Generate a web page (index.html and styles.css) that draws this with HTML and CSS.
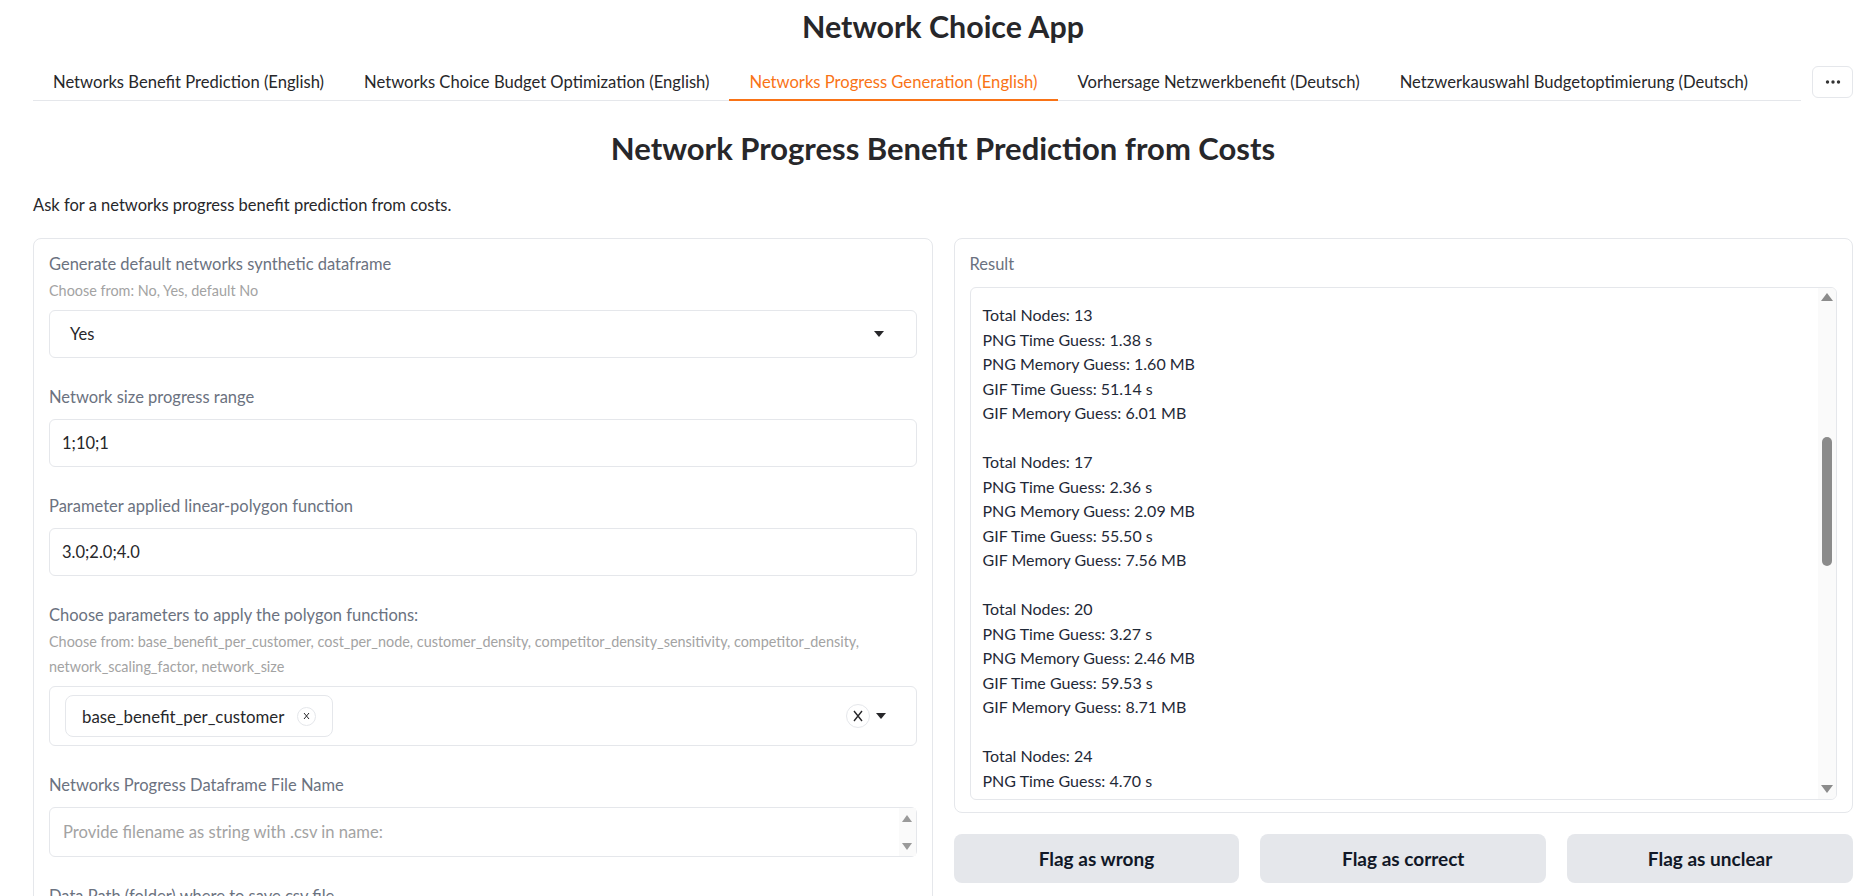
FILE: index.html
```html
<!DOCTYPE html>
<html lang="en">
<head>
<meta charset="utf-8">
<title>Network Choice App</title>
<link rel="stylesheet" href="styles.css">
</head>
<body>
<div class="app">
  <h1 class="app-title">Network Choice App</h1>
  <div class="tabbar">
    <nav class="tabs">
      <button class="tab">Networks Benefit Prediction (English)</button>
      <button class="tab">Networks Choice Budget Optimization (English)</button>
      <button class="tab active">Networks Progress Generation (English)</button>
      <button class="tab">Vorhersage Netzwerkbenefit (Deutsch)</button>
      <button class="tab">Netzwerkauswahl Budgetoptimierung (Deutsch)</button>
    </nav>
    <button class="more" aria-label="More tabs">
      <svg width="16" height="4" viewBox="0 0 16 4"><circle cx="2.5" cy="2" r="1.7"/><circle cx="8" cy="2" r="1.7"/><circle cx="13.5" cy="2" r="1.7"/></svg>
    </button>
  </div>
  <h2 class="page-title">Network Progress Benefit Prediction from Costs</h2>
  <p class="desc">Ask for a networks progress benefit prediction from costs.</p>

  <div class="columns">
    <section class="panel form">
      <div class="field">
        <div class="label has-info">Generate default networks synthetic dataframe</div>
        <div class="info">Choose from: No, Yes, default No</div>
        <div class="select"><span>Yes</span><span class="caret"></span></div>
      </div>
      <div class="field">
        <div class="label">Network size progress range</div>
        <div class="input">1;10;1</div>
      </div>
      <div class="field">
        <div class="label">Parameter applied linear-polygon function</div>
        <div class="input">3.0;2.0;4.0</div>
      </div>
      <div class="field">
        <div class="label has-info">Choose parameters to apply the polygon functions:</div>
        <div class="info">Choose from: base_benefit_per_customer, cost_per_node, customer_density, competitor_density_sensitivity, competitor_density, network_scaling_factor, network_size</div>
        <div class="multi">
          <span class="chip">base_benefit_per_customer
            <span class="chip-x"><svg width="7" height="8" viewBox="0 0 7 8"><path d="M1 1L6 7M6 1L1 7" stroke="#27272a" stroke-width="1"/></svg></span>
          </span>
          <span class="multi-tools">
            <span class="clear"><svg width="10" height="12" viewBox="0 0 10 12"><path d="M1 1L9 11M9 1L1 11" stroke="#27272a" stroke-width="1.4"/></svg></span>
            <span class="caret"></span>
          </span>
        </div>
      </div>
      <div class="field">
        <div class="label">Networks Progress Dataframe File Name</div>
        <div class="textarea">
          <span class="placeholder">Provide filename as string with .csv in name:</span>
          <span class="mini-scroll"><span class="arr up"></span><span class="arr down"></span></span>
        </div>
      </div>
      <div class="field">
        <div class="label">Data Path (folder) where to save csv file</div>
        <div class="input"></div>
      </div>
    </section>

    <div class="right">
      <section class="panel result">
        <div class="label">Result</div>
        <div class="result-box">
          <div class="result-text">
            <p>Total Nodes: 13<br>PNG Time Guess: 1.38 s<br>PNG Memory Guess: 1.60 MB<br>GIF Time Guess: 51.14 s<br>GIF Memory Guess: 6.01 MB</p>
            <p>Total Nodes: 17<br>PNG Time Guess: 2.36 s<br>PNG Memory Guess: 2.09 MB<br>GIF Time Guess: 55.50 s<br>GIF Memory Guess: 7.56 MB</p>
            <p>Total Nodes: 20<br>PNG Time Guess: 3.27 s<br>PNG Memory Guess: 2.46 MB<br>GIF Time Guess: 59.53 s<br>GIF Memory Guess: 8.71 MB</p>
            <p>Total Nodes: 24<br>PNG Time Guess: 4.70 s<br>PNG Memory Guess: 2.95 MB<br>GIF Time Guess: 63.89 s<br>GIF Memory Guess: 10.02 MB</p>
          </div>
          <div class="scrollbar">
            <span class="arr up"></span>
            <span class="thumb"></span>
            <span class="spacer"></span>
            <span class="arr down"></span>
          </div>
        </div>
      </section>
      <div class="flags">
        <button class="flag">Flag as wrong</button>
        <button class="flag">Flag as correct</button>
        <button class="flag">Flag as unclear</button>
      </div>
    </div>
  </div>
</div>
</body>
</html>
```
FILE: styles.css
```css
* { box-sizing: border-box; }
html, body { margin: 0; background: #fff; overflow: hidden; }
body {
  font-family: Lato, "Liberation Sans", sans-serif;
  font-size: 16.5px;
  color: #27272a;
}
.app { padding: 6px 22px 0 33px; }

.app-title {
  margin: 0;
  text-align: center;
  font-size: 30.4px;
  line-height: 40px;
  font-weight: 700;
  color: #27272a;
}

.tabbar { display: flex; align-items: center; gap: 11px; margin-top: 16px; }
.tabs { flex: 1; display: flex; border-bottom: 1px solid #e5e7eb; }
.tab {
  font: inherit;
  font-size: 16.6px;
  line-height: 24px;
  background: none;
  border: 0;
  border-bottom: 2px solid transparent;
  margin-bottom: -1px;
  padding: 8px 20px 5px;
  color: #27272a;
  white-space: nowrap;
}
.tab.active { color: #f97316; border-bottom-color: #f97316; }
.more {
  width: 41px; height: 32px;
  border: 1px solid #e5e7eb; border-radius: 6px;
  background: #fff; padding: 0;
  display: flex; align-items: center; justify-content: center;
}
.more svg { fill: #333; }

.page-title {
  margin: 27px 0 0;
  text-align: center;
  font-size: 31px;
  line-height: 40px;
  font-weight: 700;
  color: #27272a;
}
.desc { margin: 25px 0 0; line-height: 24px; }

.columns {
  margin-top: 21px;
  display: grid;
  grid-template-columns: 1fr 1fr;
  gap: 21px;
  align-items: start;
}
.panel { border: 1px solid #e5e7eb; border-radius: 8px; padding: 15px; background: #fff; }

.form { display: flex; flex-direction: column; gap: 29px; }
.label { line-height: 20px; color: #6b7280; margin-bottom: 12px; }
.label.has-info { margin-bottom: 4px; }
.info { font-size: 14.4px; line-height: 25px; color: #a3a3a3; margin-bottom: 7px; }

.select, .input {
  height: 48px;
  border: 1px solid #e5e7eb; border-radius: 6px;
  display: flex; align-items: center;
}
.select { justify-content: space-between; padding: 0 32px 0 20px; }
.input { padding: 0 12px; }
.caret {
  width: 0; height: 0;
  border-left: 5px solid transparent;
  border-right: 5px solid transparent;
  border-top: 6px solid #27272a;
}

.multi {
  height: 60px;
  border: 1px solid #e5e7eb; border-radius: 6px;
  display: flex; align-items: center; justify-content: space-between;
  padding: 0 30px 0 15px;
}
.chip {
  height: 42px;
  border: 1px solid #e5e7eb; border-radius: 8px;
  display: flex; align-items: center; gap: 13px;
  padding: 0 16px 0 16px;
  font-size: 16.8px;
}
.chip-x {
  width: 19px; height: 19px;
  border: 1px solid #e5e7eb; border-radius: 50%;
  display: flex; align-items: center; justify-content: center;
}
.multi-tools { display: flex; align-items: center; gap: 6px; }
.clear {
  width: 24px; height: 24px;
  border: 1px solid #e5e7eb; border-radius: 50%;
  display: flex; align-items: center; justify-content: center;
}

.textarea {
  height: 50px;
  border: 1px solid #e5e7eb; border-radius: 6px;
  display: flex;
}
.placeholder { flex: 1; align-self: center; padding-left: 13px; color: #a3a3a3; font-size: 16.6px; }
.mini-scroll {
  width: 17px; background: #fafafa;
  display: flex; flex-direction: column; align-items: center; justify-content: space-between;
  padding: 7px 0 6px;
}
.arr { width: 0; height: 0; border-left: 5px solid transparent; border-right: 5px solid transparent; }
.arr.up { border-bottom: 7px solid #9a9a9a; }
.arr.down { border-top: 7px solid #9a9a9a; }

.right { display: flex; flex-direction: column; gap: 21px; }
.result { padding-bottom: 12px; }
.result .label { margin-bottom: 13px; }
.result-box {
  height: 513px;
  border: 1px solid #e5e7eb; border-radius: 6px;
  display: flex;
  overflow: hidden;
}
.result-text {
  flex: 1;
  overflow: hidden;
  padding: 15px 12px 0;
  line-height: 24.5px;
  font-size: 16px;
  color: #1f2937;
}
.result-text p { margin: 0 0 24.5px; }
.scrollbar {
  width: 18px;
  background: #fafafa;
  display: flex; flex-direction: column; align-items: center;
  padding: 5px 0 6px;
}
.scrollbar .arr { border-left-width: 6px; border-right-width: 6px; }
.scrollbar .arr.up { border-bottom: 8px solid #8b8b8b; }
.scrollbar .arr.down { border-top: 8px solid #8b8b8b; }
.thumb { width: 10px; height: 129px; margin-top: 136px; border-radius: 5px; background: #8b8b8b; }
.spacer { flex: 1; }

.flags { display: grid; grid-template-columns: repeat(3, 1fr); gap: 21px; }
.flag {
  height: 49px;
  border: 0; border-radius: 8px;
  background: #e5e7eb;
  font-family: inherit;
  font-size: 19px;
  font-weight: 700;
  color: #111827;
}
```
